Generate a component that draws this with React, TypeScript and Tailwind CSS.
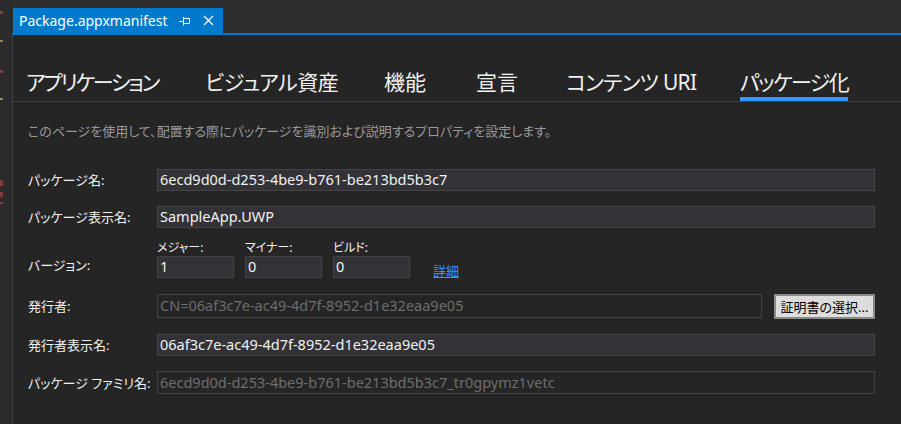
import React from 'react';

const tabs = [
  { label: 'アプリケーション', cls: 'w-[179px] tracking-[-2.2px]' },
  { label: 'ビジュアル資産', cls: 'w-[179px] tracking-[-0.5px]' },
  { label: '機能', cls: 'w-[92px]' },
  { label: '宣言', cls: 'w-[90px]' },
  { label: 'コンテンツ URI', cls: 'w-[174px] tracking-[-0.7px]' },
];

const Field = ({ value, disabled = false, className = '' }: { value: string; disabled?: boolean; className?: string }) => (
  <div
    className={`flex items-center border border-[#434346] pl-[2px] text-[14.5px] whitespace-nowrap overflow-hidden ${
      disabled ? 'bg-transparent text-[#6d6d6d]' : 'bg-[#333337] text-[#f1f1f1]'
    } ${className}`}
  >
    {value}
  </div>
);

const Label = ({ children, className = '' }: { children: React.ReactNode; className?: string }) => (
  <div className={`w-[129px] shrink-0 text-[13px] leading-[16px] text-[#f1f1f1] ${className}`}>{children}</div>
);

const App = () => {
  return (
    <div className="w-[901px] h-[424px] overflow-hidden flex bg-[#252526] font-['Noto_Sans','Noto_Sans_CJK_JP',sans-serif] [font-feature-settings:'palt']">
      {/* left strip */}
      <div className="w-[12px] shrink-0 bg-[#2b2b2e] flex flex-col">
        <div className="mt-[11px] w-[3px] h-[3px] bg-[#8a3a3a]" />
        <div className="mt-[26px] w-[3px] h-[2px] bg-[#8a8a5a]" />
        <div className="mt-[28px] w-[3px] h-[3px] bg-[#8a3a3a]" />
        <div className="mt-[25px] w-[3px] h-[2px] bg-[#7a9a5a]" />
        <div className="mt-[80px] w-[3px] h-[6px] bg-[#8a3a3a]" />
        <div className="mt-[6px] w-[3px] h-[5px] bg-[#8a3a3a]" />
        <div className="mt-[5px] w-[3px] h-[2px] bg-[#8a3a3a]" />
      </div>

      <div className="flex-1 flex flex-col min-w-0">
        {/* document tab bar */}
        <div className="h-[33px] bg-[#2d2d30] flex items-end pl-[1px]">
          <div className="h-[25px] w-[210px] bg-[#007acc] flex items-center pl-[6px] text-white text-[14px]">
            <span>Package.appxmanifest</span>
            <svg className="ml-[11px]" width="11" height="10" viewBox="0 0 11 10" fill="none" stroke="white" strokeWidth="1">
              <path d="M0 5.5H4.5M4.5 1V9.5M4.5 2.5H10.5V7.5H4.5" />
            </svg>
            <svg className="ml-[13px]" width="11" height="11" viewBox="0 0 11 11" fill="none" stroke="white" strokeWidth="1.4">
              <path d="M1 1L10 10M10 1L1 10" />
            </svg>
          </div>
        </div>
        <div className="h-[2px] bg-[#007acc]" />

        <div className="flex-1 flex flex-col border-l border-[#3f3f46]">
          {/* section tabs */}
          <div className="h-[67px] flex items-end pl-[13px] border-b border-[#3f3f46]">
            {tabs.map(t => (
              <div key={t.label} className={`${t.cls} shrink-0 text-[21px] leading-[28px] text-[#f1f1f1] pb-[5px] whitespace-nowrap`}>
                {t.label}
              </div>
            ))}
            <div className="flex flex-col shrink-0">
              <div className="text-[21px] leading-[28px] text-[#f1f1f1] tracking-[-1.6px] pb-[1px] whitespace-nowrap">パッケージ化</div>
              <div className="h-[4px] bg-[#3399ff]" />
            </div>
          </div>

          {/* form */}
          <div className="pl-[15px] pr-[26px] flex flex-col">
            <div className="mt-[21px] text-[13px] leading-[16px] text-[#999999] whitespace-nowrap">
              このページを使用して、配置する際にパッケージを識別および説明するプロパティを設定します。
            </div>

            <div className="mt-[30px] flex items-center">
              <Label>パッケージ名:</Label>
              <Field value="6ecd9d0d-d253-4be9-b761-be213bd5b3c7" className="flex-1 h-[22px]" />
            </div>

            <div className="mt-[15px] flex items-center">
              <Label>パッケージ表示名:</Label>
              <Field value="SampleApp.UWP" className="flex-1 h-[22px]" />
            </div>

            <div className="mt-[12px] flex items-end">
              <Label className="mb-[5px]">バージョン:</Label>
              <div className="grid grid-cols-3 gap-x-[11px] w-[253px]">
                <div className="text-[12px] leading-[16px] text-[#f1f1f1]">メジャー:</div>
                <div className="text-[12px] leading-[16px] text-[#f1f1f1]">マイナー:</div>
                <div className="text-[12px] leading-[16px] text-[#f1f1f1]">ビルド:</div>
                <Field value="1" className="h-[22px]" />
                <Field value="0" className="h-[22px]" />
                <Field value="0" className="h-[22px]" />
              </div>
              <a className="ml-[23px] mb-[-1px] text-[13px] leading-[16px] text-[#3399ff] underline">詳細</a>
            </div>

            <div className="mt-[16px] flex items-start">
              <Label className="mt-[4px]">発行者:</Label>
              <Field value="CN=06af3c7e-ac49-4d7f-8952-d1e32eaa9e05" disabled className="flex-1 h-[24px]" />
              <button className="ml-[12px] w-[101px] h-[25px] bg-[#dddddd] border-2 border-[#8a8a8a] text-black text-[13px] leading-[16px] whitespace-nowrap flex items-center justify-center">
                証明書の選択...
              </button>
            </div>

            <div className="mt-[15px] flex items-center">
              <Label>発行者表示名:</Label>
              <Field value="06af3c7e-ac49-4d7f-8952-d1e32eaa9e05" className="flex-1 h-[22px]" />
            </div>

            <div className="mt-[15px] flex items-center">
              <Label>パッケージ ファミリ名:</Label>
              <Field value="6ecd9d0d-d253-4be9-b761-be213bd5b3c7_tr0gpymz1vetc" disabled className="flex-1 h-[23px]" />
            </div>
          </div>
        </div>
      </div>
    </div>
  );
};

export default App;
